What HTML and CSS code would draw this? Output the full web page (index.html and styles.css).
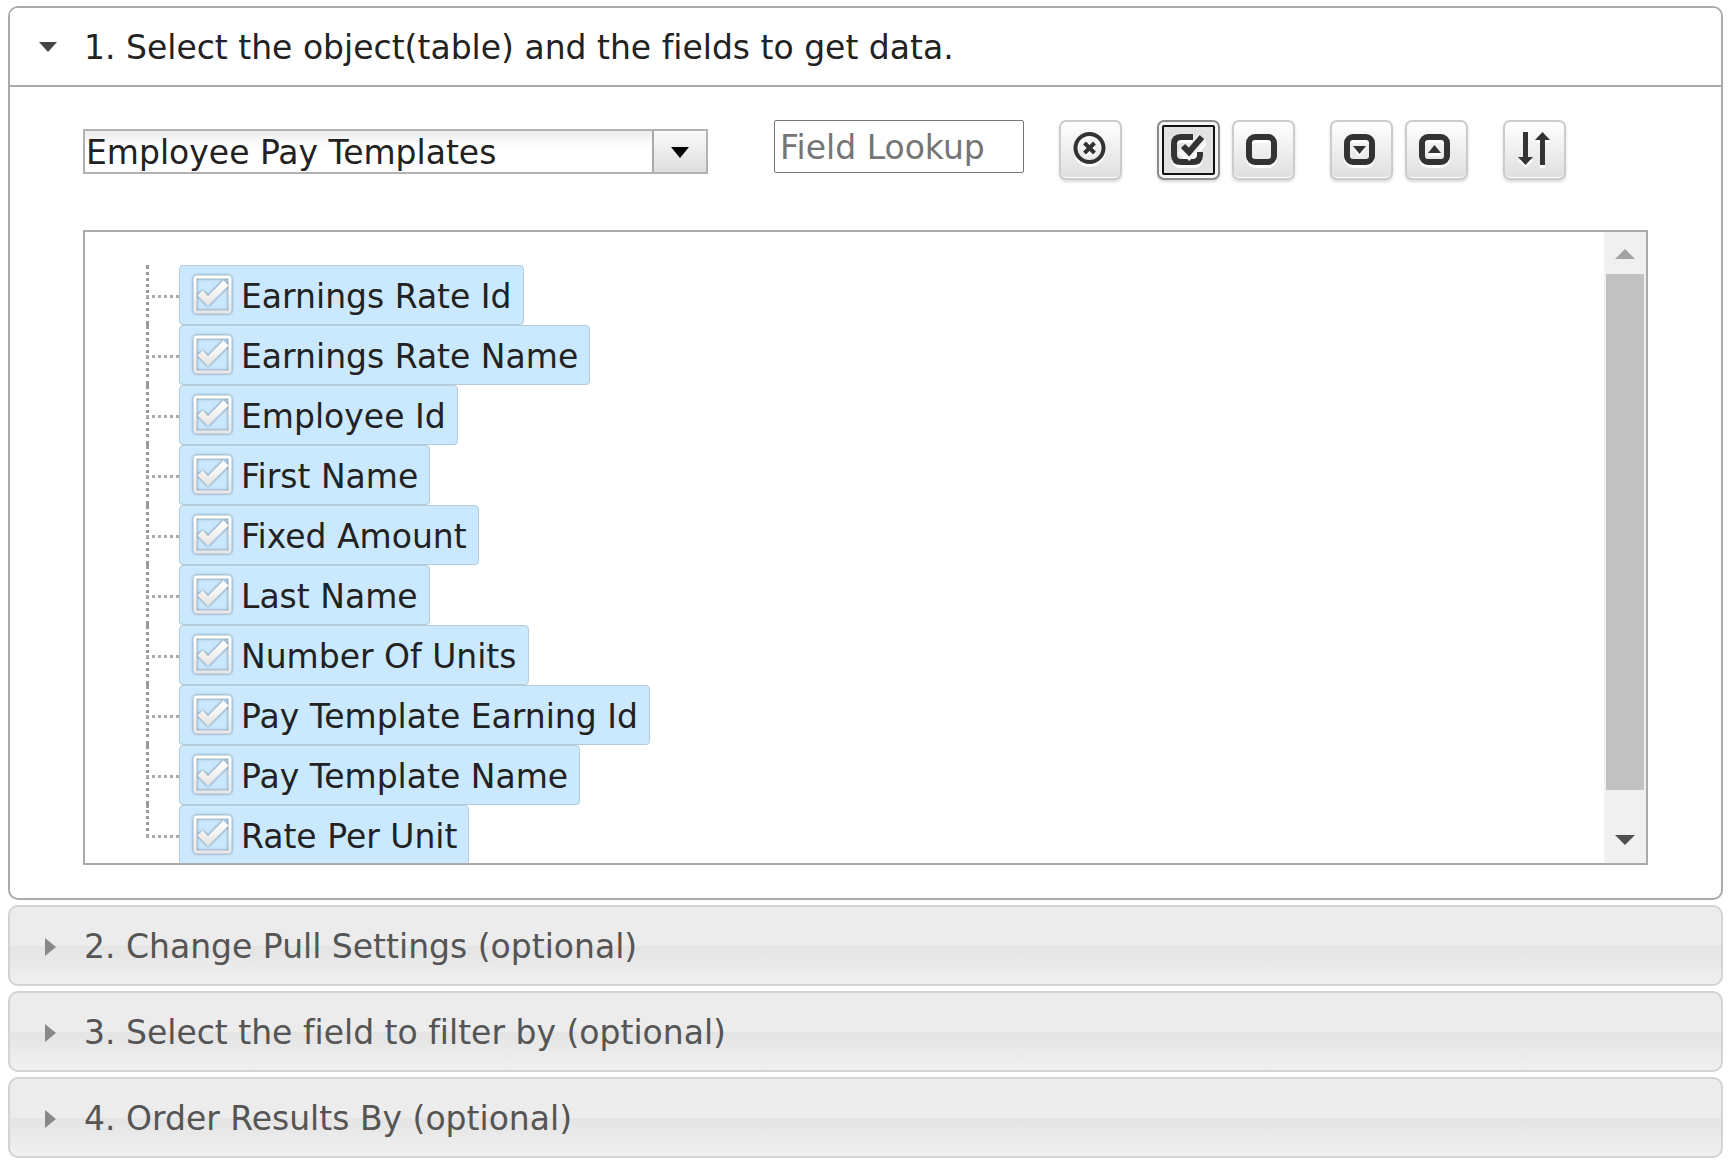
FILE: index.html
```
<!DOCTYPE html>
<html lang="en">
<head>
  <meta charset="UTF-8" />
  <meta name="viewport" content="width=device-width, initial-scale=1.0"/>
  <title>Get Data</title>
  <link rel="stylesheet" href="styles.css">
</head>
<body>

  <main class="accordion">
    <section class="panel">
      <h3><button class="header open" aria-expanded="true">
        <svg class="marker" viewBox="0 0 20 20"><path d="M1 4h18l-9 10z"/></svg>1. Select the object(table) and the fields to get data.
      </button></h3>

      <div class="content">
        <div class="toolbar">
          <select class="object-select" aria-label="Object">
            <option>Employee Pay Templates</option>
          </select>
          <input class="lookup" type="text" placeholder="Field Lookup" aria-label="Field Lookup" />
          <button class="tool" title="Clear lookup">
            <svg viewBox="0 0 36 36"><circle cx="17.500" cy="18" r="14"/><path d="M12.500 13l10 10M22.500 13l-10 10"/></svg>
          </button>
          <div class="tool-group">
            <button class="tool focused" title="Select all">
              <svg viewBox="0 0 36 36"><path class="thick" d="M23 7H11q-7 0-7 7v11q0 7 7 7h12q7 0 7-7V22"/><path class="gap" d="M12 16l7 7 14-16"/><path class="thick" d="M13 16l6 6 13-15"/></svg>
            </button>
            <button class="tool" title="Select none">
              <svg viewBox="0 0 36 36"><rect class="thick" x="4" y="7" width="25" height="25" rx="6"/></svg>
            </button>
          </div>
          <div class="tool-group">
            <button class="tool" title="Expand all">
              <svg viewBox="0 0 36 36"><rect class="thick" x="4" y="7" width="25" height="25" rx="6"/><path class="solid" d="M10 16h13l-6.500 8z"/></svg>
            </button>
            <button class="tool" title="Collapse all">
              <svg viewBox="0 0 36 36"><rect class="thick" x="4" y="7" width="25" height="25" rx="6"/><path class="solid" d="M10 23h13l-6.500-8z"/></svg>
            </button>
          </div>
          <button class="tool" title="Sort">
            <svg viewBox="0 0 36 36"><path class="solid" d="M7 2h5v25h5l-7.500 8L2 27h5zM24 35h5V10h5l-7.500-8L19 10h5z"/></svg>
          </button>
        </div>

        <div class="tree">
          <ul class="fields">
            <li><label><input type="checkbox" checked />Earnings Rate Id</label></li>
            <li><label><input type="checkbox" checked />Earnings Rate Name</label></li>
            <li><label><input type="checkbox" checked />Employee Id</label></li>
            <li><label><input type="checkbox" checked />First Name</label></li>
            <li><label><input type="checkbox" checked />Fixed Amount</label></li>
            <li><label><input type="checkbox" checked />Last Name</label></li>
            <li><label><input type="checkbox" checked />Number Of Units</label></li>
            <li><label><input type="checkbox" checked />Pay Template Earning Id</label></li>
            <li><label><input type="checkbox" checked />Pay Template Name</label></li>
            <li><label><input type="checkbox" checked />Rate Per Unit</label></li>
          </ul>
          <div class="scrollbar">
            <button class="scroll-btn up" aria-label="Scroll up"><svg viewBox="0 0 20 10"><path d="M0 10L10 0l10 10z"/></svg></button>
            <div class="track"><div class="thumb"></div></div>
            <button class="scroll-btn down" aria-label="Scroll down"><svg viewBox="0 0 20 10"><path d="M0 0h20L10 10z"/></svg></button>
          </div>
        </div>
      </div>
    </section>

    <h3><button class="header" aria-expanded="false">
      <svg class="marker" viewBox="0 0 20 20"><path d="M7 1v18l11-9z"/></svg>2. Change Pull Settings (optional)
    </button></h3>
    <h3><button class="header" aria-expanded="false">
      <svg class="marker" viewBox="0 0 20 20"><path d="M7 1v18l11-9z"/></svg>3. Select the field to filter by (optional)
    </button></h3>
    <h3><button class="header" aria-expanded="false">
      <svg class="marker" viewBox="0 0 20 20"><path d="M7 1v18l11-9z"/></svg>4. Order Results By (optional)
    </button></h3>
  </main>

</body>
</html>
```
FILE: styles.css
```
* { margin: 0; padding: 0; box-sizing: border-box; }
body {
  font-family: Verdana, 'DejaVu Sans', sans-serif;
  font-size: 33px;
  line-height: 40px;
  font-variant-ligatures: none;
  color: #222;
  background: #fff;
}
button, input, select {
  font: inherit;
  font-variant-ligatures: none;
  color: inherit;
}
.accordion {
  padding: 6px 6px 4px 8px;
  display: flex;
  flex-direction: column;
  gap: 5px;
}
h3 {
  font-size: 33px;
  font-weight: normal;
}

/* section headers */
.header {
  display: flex;
  align-items: center;
  gap: 26px;
  width: 100%;
  height: 81px;
  padding: 2px 0 0 28px;
  text-align: left;
  color: #555;
  border: 2px solid #d3d3d3;
  border-radius: 10px;
  background: linear-gradient(#ececec 50%, #e4e4e4 51%, #f0f0f0);
  cursor: pointer;
}
.header.open {
  color: #222;
  border: none;
  border-bottom: 2px solid #aaa;
  border-radius: 0;
  height: 79px;
  background: #fff;
}
.marker {
  width: 20px;
  height: 20px;
  flex: none;
  fill: #888;
}
.open .marker { fill: #454545; }
.panel {
  border: 2px solid #aaa;
  border-radius: 10px;
  overflow: hidden;
}
.content { padding: 33px 73px; }

/* toolbar */
.toolbar {
  display: flex;
  align-items: flex-start;
  gap: 35px;
  margin-bottom: 50px;
}
.object-select {
  appearance: none;
  width: 625px;
  height: 45px;
  margin: 9px 31px 0 0;
  padding: 2px 0 0 1px;
  border: 2px solid #b2b2b2;
  border-radius: 0;
  background:
    url("data:image/svg+xml,%3Csvg xmlns='http://www.w3.org/2000/svg' width='18' height='12'%3E%3Cpath d='M0 0h18L9 11z'/%3E%3C/svg%3E") right 17px top 16px no-repeat,
    linear-gradient(#aaa, #aaa) right 52px top / 2px 100% no-repeat,
    linear-gradient(#fafafa, #dedede) right top / 52px 100% no-repeat,
    linear-gradient(#ececec, #fff 40%);
}
.lookup {
  width: 250px;
  height: 53px;
  padding: 2px 5px 0;
  border: 1px solid #767676;
  border-radius: 2px;
}
.lookup::placeholder { color: #757575; }
.tool-group {
  display: flex;
  gap: 12px;
}
.tool {
  display: flex;
  align-items: center;
  justify-content: center;
  width: 63px;
  height: 60px;
  padding: 0 1px 4px 0;
  border: 2px solid #ccc;
  border-radius: 7px;
  background: linear-gradient(#fff, #dedede);
  box-shadow: inset 0 -1px #fff, 0 2px 3px rgba(0, 0, 0, 0.15);
  cursor: pointer;
}
.tool.focused {
  border-color: #8c8c8c;
  background: #e2e2e2;
  box-shadow: inset 0 0 0 3px #f4f4f4, 0 2px 3px rgba(0, 0, 0, 0.15);
  outline: 2px solid #111;
  outline-offset: -7px;
}
.tool svg {
  width: 36px;
  height: 36px;
  fill: none;
  stroke: #333;
  stroke-width: 4;
  filter: drop-shadow(0 3px #fff);
}
.tool .thick { stroke-width: 6; }
.tool .gap { stroke: #f4f4f4; stroke-width: 11; }
.tool .solid { fill: #333; stroke: none; }

/* field tree */
.tree {
  display: flex;
  height: 635px;
  border: 2px solid #aaa;
}
.fields {
  flex: 1;
  overflow: hidden;
  list-style: none;
  padding: 33px 0 0 61px;
}
.fields li {
  display: flex;
  position: relative;
  height: 60px;
  padding-left: 33px;
}
.fields li::before,
.fields li::after {
  content: "";
  position: absolute;
  left: 0;
  top: 0;
}
.fields li::before {
  height: 60px;
  border-left: 3px dotted #999;
}
.fields li:last-child::before { height: 32px; }
.fields li::after {
  top: 30px;
  width: 33px;
  border-top: 3px dotted #aaa;
}
.fields label {
  display: flex;
  align-items: center;
  padding: 3px 11px 0 10px;
  border: 1px solid #b5cbd9;
  border-radius: 4px;
  background: #cbe9fe;
}
.fields input {
  appearance: none;
  width: 44px;
  height: 44px;
  margin: 0 7px 6px 0;
}
.fields input:checked {
  background: url("data:image/svg+xml,%3Csvg xmlns='http://www.w3.org/2000/svg' viewBox='0 0 44 44'%3E%3Cdefs%3E%3Cfilter id='s' x='-20%25' y='-20%25' width='140%25' height='140%25'%3E%3CfeDropShadow dx='0' dy='0' stdDeviation='1.500' flood-color='%23456' flood-opacity='.9'/%3E%3C/filter%3E%3ClinearGradient id='g' x1='0' y1='0' x2='0' y2='1'%3E%3Cstop stop-color='%23fff'/%3E%3Cstop offset='1' stop-color='%23e8e8e8'/%3E%3C/linearGradient%3E%3C/defs%3E%3Cg fill='none' stroke='url(%23g)' filter='url(%23s)'%3E%3Crect x='5' y='5' width='35' height='35' rx='2' stroke-width='3'/%3E%3Cpath d='M10 21l8 8L36 11' stroke-width='7'/%3E%3C/g%3E%3C/svg%3E") no-repeat;
}

/* scrollbar */
.scrollbar {
  display: flex;
  flex-direction: column;
  width: 42px;
  padding: 0 2px 2px;
  background: #f0f0f0;
}
.scroll-btn {
  display: flex;
  align-items: center;
  justify-content: center;
  height: 42px;
  padding-top: 2px;
  border: none;
  background: none;
}
.scroll-btn svg {
  width: 20px;
  height: 10px;
  fill: #505050;
}
.scroll-btn.up svg { fill: #a3a3a3; }
.scroll-btn.down { padding: 0; }
.track {
  flex: 1;
  padding-bottom: 29px;
}
.thumb {
  height: 100%;
  background: #c1c1c1;
}
```
